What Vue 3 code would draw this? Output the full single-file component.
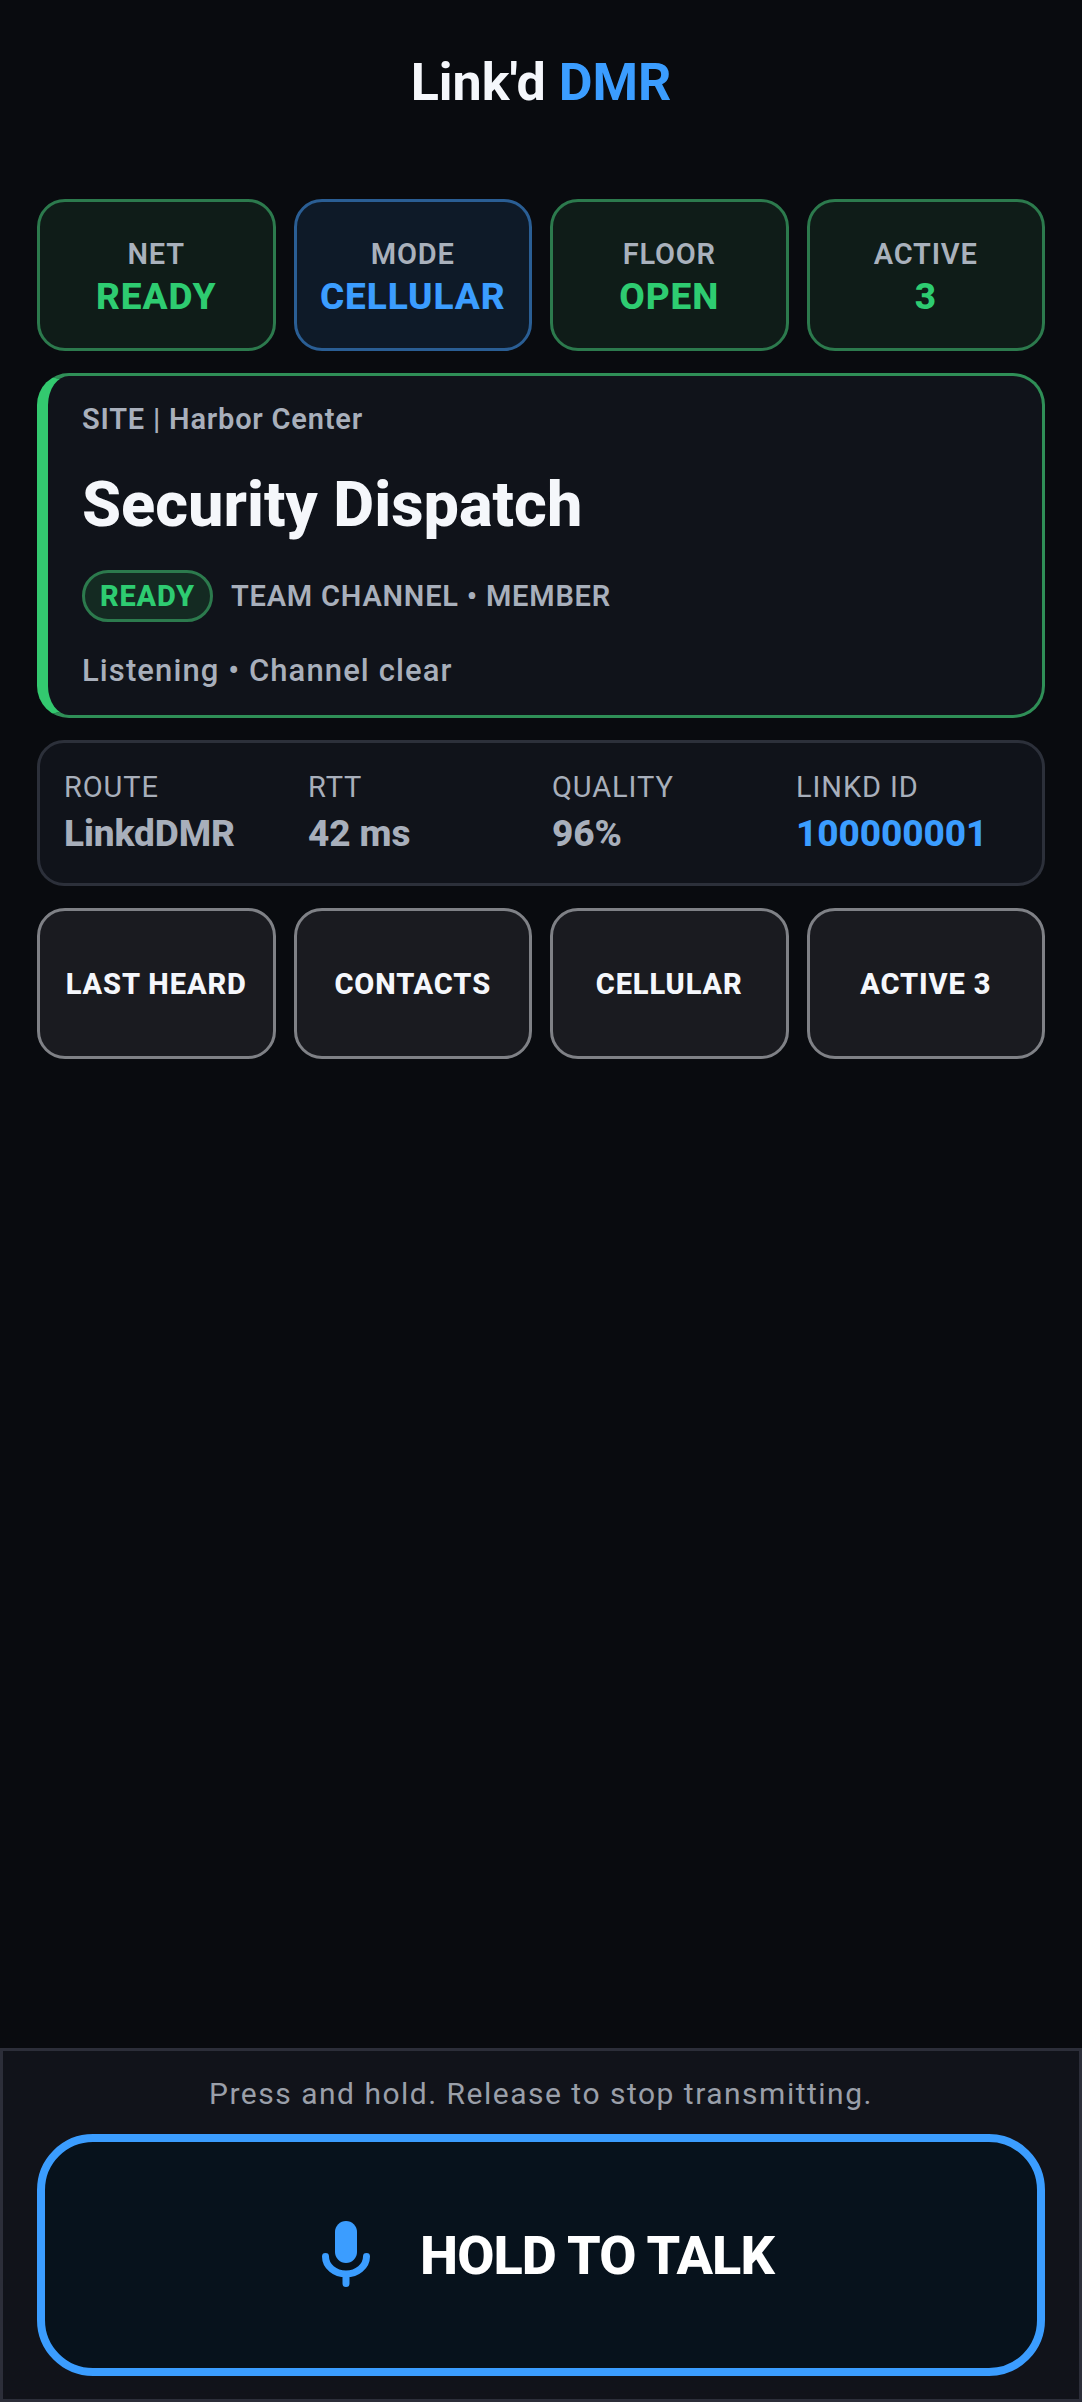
<script setup>
const pills = [
  { label: 'NET', value: 'READY', tone: 'green' },
  { label: 'MODE', value: 'CELLULAR', tone: 'blue' },
  { label: 'FLOOR', value: 'OPEN', tone: 'green' },
  { label: 'ACTIVE', value: '3', tone: 'green' },
]
const stats = [
  { label: 'ROUTE', value: 'LinkdDMR' },
  { label: 'RTT', value: '42 ms' },
  { label: 'QUALITY', value: '96%' },
  { label: 'LINKD ID', value: '100000001', accent: true },
]
const actions = ['LAST HEARD', 'CONTACTS', 'CELLULAR', 'ACTIVE 3']
</script>

<template>
  <div class="app">
    <main class="main">
      <header class="header">
        <h1 class="title">Link'd <span class="accent">DMR</span></h1>
      </header>

      <section class="grid">
        <div v-for="p in pills" :key="p.label" class="pill" :class="p.tone">
          <span class="pill-label">{{ p.label }}</span>
          <span class="pill-value">{{ p.value }}</span>
        </div>
      </section>

      <section class="card">
        <div class="site">SITE | Harbor Center</div>
        <h2 class="channel">Security Dispatch</h2>
        <div class="meta">
          <span class="badge">READY</span>
          <span class="meta-text">TEAM CHANNEL • MEMBER</span>
        </div>
        <div class="status">Listening • Channel clear</div>
      </section>

      <section class="stats">
        <div v-for="s in stats" :key="s.label" class="stat">
          <span class="stat-label">{{ s.label }}</span>
          <span class="stat-value" :class="{ accent: s.accent }">{{ s.value }}</span>
        </div>
      </section>

      <section class="grid">
        <button v-for="a in actions" :key="a" class="action" type="button">{{ a }}</button>
      </section>
    </main>

    <footer class="footer">
      <p class="hint">Press and hold. Release to stop transmitting.</p>
      <button class="ptt" type="button">
        <span class="mic-box">
          <svg class="mic" viewBox="0 0 48 66" width="48" height="66" aria-hidden="true">
            <rect x="13" y="0" width="22" height="42" rx="11" fill="#3b9dff" />
            <path d="M3.5 35.5a20.5 17.5 0 0 0 41 0M24 53v9.5" fill="none" stroke="#3b9dff" stroke-width="7" stroke-linecap="round" />
          </svg>
        </span>
        <span class="ptt-text">HOLD TO TALK</span>
      </button>
    </footer>
  </div>
</template>

<style>
html, body { margin: 0; background: #090b0f; }
</style>

<style scoped>
.app {
  min-height: 100vh;
  display: flex;
  flex-direction: column;
  box-sizing: border-box;
  background: #090b0f;
  font-family: Roboto, "Liberation Sans", sans-serif;
}
.main {
  flex: 1;
  display: flex;
  flex-direction: column;
  gap: 22px;
  padding: 0 37px;
}
.header {
  height: 177px;
  box-sizing: border-box;
  padding-top: 53px;
  text-align: center;
}
.title {
  margin: 0;
  font-size: 52px;
  line-height: 60px;
  font-weight: 700;
  color: #f5f7fb;
}
.accent { color: #3b9dff; }
.grid {
  display: grid;
  grid-template-columns: repeat(4, 1fr);
  column-gap: 18px;
}
.pill {
  height: 152px;
  box-sizing: border-box;
  border: 3px solid;
  border-radius: 28px;
  padding-top: 4px;
  display: flex;
  flex-direction: column;
  align-items: center;
  justify-content: center;
  gap: 1px;
}
.pill.green { background: #0f1c18; border-color: #2c7a4d; }
.pill.blue { background: #0e1a28; border-color: #2a5e94; }
.pill-label {
  font-size: 29px;
  line-height: 38px;
  font-weight: 600;
  letter-spacing: 0.8px;
  color: #a9b1bc;
}
.pill-value {
  font-size: 37px;
  line-height: 46px;
  font-weight: 800;
  letter-spacing: 0.9px;
}
.green .pill-value { color: #2ecc71; }
.blue .pill-value { color: #3b9dff; }
.card {
  height: 345px;
  box-sizing: border-box;
  background: #10131a;
  border: 3px solid #2f8f57;
  border-left: 11px solid #33c96f;
  border-radius: 32px;
  padding: 24px 35px 24px 34px;
  display: flex;
  flex-direction: column;
}
.site {
  font-size: 29px;
  line-height: 38px;
  font-weight: 600;
  letter-spacing: 0.8px;
  color: #a8afbb;
}
.channel {
  margin: 29px 0 0;
  font-size: 63px;
  line-height: 76px;
  font-weight: 800;
  color: #f5f7fb;
}
.meta {
  margin-top: 27px;
  display: flex;
  align-items: center;
  gap: 18px;
}
.badge {
  box-sizing: border-box;
  height: 52px;
  padding: 0 15px;
  border: 3px solid #2c7a4d;
  border-radius: 26px;
  background: #142a22;
  display: flex;
  align-items: center;
  font-size: 29px;
  font-weight: 800;
  letter-spacing: 0.8px;
  color: #2ecc71;
}
.meta-text {
  font-size: 29px;
  line-height: 38px;
  font-weight: 600;
  letter-spacing: 0.8px;
  color: #a8afbb;
}
.status {
  margin-top: 29px;
  font-size: 31px;
  line-height: 40px;
  font-weight: 500;
  letter-spacing: 1.1px;
  color: #a8afbb;
}
.stats {
  height: 146px;
  box-sizing: border-box;
  background: #10131a;
  border: 3px solid #2c303a;
  border-radius: 27px;
  padding: 25px 24px;
  display: grid;
  grid-template-columns: repeat(4, 1fr);
  column-gap: 22px;
}
.stat {
  display: flex;
  flex-direction: column;
  gap: 5px;
}
.stat-label {
  font-size: 29px;
  line-height: 38px;
  letter-spacing: 0.9px;
  color: #a8afbb;
}
.stat-value {
  font-size: 37px;
  line-height: 46px;
  font-weight: 800;
  letter-spacing: -0.1px;
  color: #a8afbb;
}
.stat-value.accent { color: #3b9dff; }
.action {
  height: 151px;
  box-sizing: border-box;
  border: 3px solid #7f8186;
  border-radius: 28px;
  background: #1a1b20;
  color: #f5f7fb;
  font-family: inherit;
  font-size: 29px;
  font-weight: 800;
  letter-spacing: 0.9px;
  padding: 0;
}
.footer {
  box-sizing: border-box;
  background: #11131a;
  border: 3px solid #2c2e39;
  padding: 23px 34px;
  display: flex;
  flex-direction: column;
  gap: 20px;
}
.hint {
  margin: 0;
  text-align: center;
  font-size: 30px;
  line-height: 40px;
  letter-spacing: 1.5px;
  color: #9a9fa9;
}
.ptt {
  height: 242px;
  box-sizing: border-box;
  border: 8px solid #3b9dff;
  border-radius: 56px;
  background: #07121c;
  padding: 0;
  display: flex;
  align-items: center;
  justify-content: center;
  gap: 36px;
  font-family: inherit;
}
.mic-box {
  width: 76px;
  display: flex;
  justify-content: center;
  margin-top: -2px;
}
.mic { display: block; }
.ptt-text {
  font-size: 54px;
  font-weight: 800;
  letter-spacing: -0.9px;
  color: #ffffff;
}
</style>
